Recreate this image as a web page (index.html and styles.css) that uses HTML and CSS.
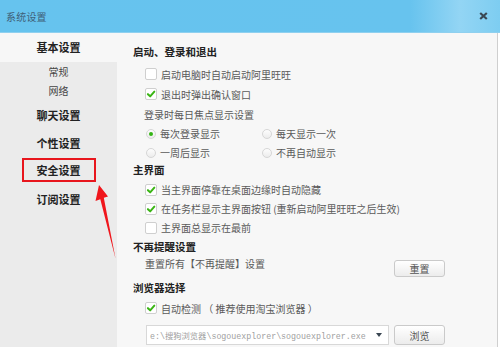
FILE: index.html
```html
<!DOCTYPE html>
<html lang="zh-CN">
<head>
<meta charset="utf-8">
<link rel="stylesheet" href="styles.css">
</head>
<body>
<div class="window">
  <div class="titlebar">
    <span class="title">系统设置</span>
    <svg class="close" width="9" height="8" viewBox="0 0 9 8"><path d="M1.2 1 L7.8 7 M7.8 1 L1.2 7"/></svg>
  </div>
  <div class="main">
    <nav class="sidebar">
      <div class="nav-head">基本设置</div>
      <div class="nav-subs">
        <div class="nav-sub">常规</div>
        <div class="nav-sub">网络</div>
      </div>
      <div class="nav-item">聊天设置</div>
      <div class="nav-item">个性设置</div>
      <div class="nav-item"><span class="highlight">安全设置</span></div>
      <div class="nav-item">订阅设置</div>
    </nav>
    <section class="content">
      <div class="group">
        <div class="heading">启动、登录和退出</div>
        <div class="row"><span class="cb"></span>启动电脑时自动启动阿里旺旺</div>
        <div class="row"><span class="cb on"><svg viewBox="0 0 12 12"><path d="M2.3 6.2 L5 8.8 L10 3.2"/></svg></span>退出时弹出确认窗口</div>
        <div class="row label">登录时每日焦点显示设置</div>
        <div class="radios">
          <div class="row rrow"><span class="radio on"></span>每次登录显示</div>
          <div class="row rrow"><span class="radio"></span>每天显示一次</div>
          <div class="row rrow"><span class="radio"></span>一周后显示</div>
          <div class="row rrow"><span class="radio"></span>不再自动显示</div>
        </div>
      </div>
      <div class="group g2">
        <div class="heading">主界面</div>
        <div class="row r19"><span class="cb on"><svg viewBox="0 0 12 12"><path d="M2.3 6.2 L5 8.8 L10 3.2"/></svg></span>当主界面停靠在桌面边缘时自动隐藏</div>
        <div class="row r19"><span class="cb on"><svg viewBox="0 0 12 12"><path d="M2.3 6.2 L5 8.8 L10 3.2"/></svg></span>在任务栏显示主界面按钮 (重新启动阿里旺旺之后生效)</div>
        <div class="row r19"><span class="cb"></span>主界面总显示在最前</div>
      </div>
      <div class="group">
        <div class="heading">不再提醒设置</div>
        <div class="reset-row">
          <span class="reset-text">重置所有【不再提醒】设置</span>
          <span class="btn btn-reset">重置</span>
        </div>
      </div>
      <div class="group g4">
        <div class="heading">浏览器选择</div>
        <div class="row"><span class="cb on"><svg viewBox="0 0 12 12"><path d="M2.3 6.2 L5 8.8 L10 3.2"/></svg></span>自动检测 （ 推荐使用淘宝浏览器 ）</div>
        <div class="path-row">
          <div class="select">
            <span class="path">e:\搜狗浏览器\sogouexplorer\sogouexplorer.exe</span>
            <span class="caret"></span>
          </div>
          <span class="btn btn-browse">浏览</span>
        </div>
      </div>
    </section>
  </div>
  <svg class="arrow" width="500" height="347" viewBox="0 0 500 347">
    <polygon points="99,185 95.5,201 100.3,199.2 115.6,259 103.8,197.8 108,196.6" fill="#f0161c"/>
  </svg>
</div>
</body>
</html>
```

FILE: styles.css
```css
* { box-sizing: border-box; margin: 0; padding: 0; }
html, body { width: 500px; height: 347px; overflow: hidden; background: #ffffff; }
body {
  font-family: "Noto Sans CJK SC", "Noto Sans", sans-serif;
  font-size: 10px;
  color: #555;
}
.window { position: relative; width: 500px; height: 347px; }
.titlebar {
  height: 33px;
  display: flex;
  align-items: center;
  justify-content: space-between;
  padding: 0 12px 0 6px;
  background: linear-gradient(to right, #66c3ee 0%, #67c3ee 82%, #93d5f4 92%, #7dcdf1 100%);
  border-bottom: 1px solid #8fd0ef;
}
.title { font-size: 10px; color: #3f6078; letter-spacing: 0.2px; }
.close { margin-top: -1px; }
.close path { stroke: #3a4853; stroke-width: 2.2; fill: none; }
.main {
  display: flex;
  width: 498px;
  height: 314px;
  border-right: 1px solid #cfcfcf;
  background: #f7f7f7;
}
.sidebar {
  width: 117px;
  flex: none;
  background: #ebebeb;
  color: #222;
}
.nav-head {
  height: 29px;
  line-height: 29px;
  text-align: center;
  font-weight: bold;
  font-size: 11px;
  background: #f7f7f7;
}
.nav-subs { margin-bottom: 1px; }
.nav-sub {
  height: 19px;
  line-height: 19px;
  text-align: center;
  font-size: 10px;
  color: #444;
}
.nav-item {
  height: 28px;
  display: flex;
  align-items: center;
  justify-content: center;
  font-weight: bold;
  font-size: 11px;
}
.highlight {
  display: flex;
  align-items: center;
  justify-content: center;
  width: 74px;
  height: 24px;
  margin-top: -2px;
  border: 2px solid #e8161d;
}
.content {
  flex: 1;
  padding: 9px 0 0 16px;
}
.heading {
  height: 20px;
  line-height: 20px;
  font-weight: bold;
  font-size: 10.5px;
  color: #222;
  margin-bottom: 2px;
}
.row {
  height: 20px;
  display: flex;
  align-items: center;
  padding-left: 12px;
  color: #5a5a5a;
}
.row.label { padding-left: 11px; }
.r19 { height: 19px; }
.g2 .heading { margin-top: -2px; margin-bottom: 0; }
.cb {
  width: 12px;
  height: 12px;
  flex: none;
  margin-right: 4px;
  border: 1px solid #cfcfcf;
  border-radius: 2px;
  background: #fff;
  display: flex;
}
.cb svg { width: 10px; height: 10px; }
.cb path { fill: none; stroke: #3ab514; stroke-width: 2.4; stroke-linecap: round; stroke-linejoin: round; }
.radios {
  display: grid;
  grid-template-columns: 116px 1fr;
}
.rrow { height: 19px; padding-left: 13px; }
.radio {
  width: 10px;
  height: 10px;
  flex: none;
  margin-right: 4px;
  border: 1px solid #d6d6d6;
  border-radius: 50%;
  background: linear-gradient(#fdfdfd, #ececec);
  display: flex;
  align-items: center;
  justify-content: center;
}
.radio.on::after {
  content: "";
  width: 4px;
  height: 4px;
  border-radius: 50%;
  background: #33b414;
}
.reset-row {
  height: 20px;
  display: flex;
  justify-content: space-between;
  align-items: flex-start;
  padding-left: 12px;
  margin-top: -2px;
  width: 312px;
}
.reset-text { line-height: 14px; color: #5a5a5a; }
.btn {
  display: flex;
  align-items: center;
  justify-content: center;
  width: 51px;
  height: 17px;
  border: 1px solid #cacaca;
  border-radius: 3px;
  background: linear-gradient(#ffffff, #ececec);
  color: #555;
  font-size: 10px;
}
.btn-reset { margin-top: 3px; }
.g4 .heading { margin-top: 1px; margin-bottom: 0; }
.path-row {
  display: flex;
  align-items: center;
  gap: 5px;
  margin-top: 6px;
  padding-left: 13px;
}
.select {
  width: 243px;
  height: 20px;
  display: flex;
  align-items: center;
  justify-content: space-between;
  padding: 0 6px 0 3px;
  background: #fff;
  border: 1px solid #d8d8d8;
}
.path {
  font-family: "Liberation Mono", "Noto Sans CJK SC", monospace;
  font-size: 8.3px;
  color: #a0a0a0;
}
.caret {
  width: 0;
  height: 0;
  border-left: 3.5px solid transparent;
  border-right: 3.5px solid transparent;
  border-top: 4px solid #3a4652;
}
.btn-browse { height: 20px; margin-top: 1px; }
.arrow { position: absolute; left: 0; top: 0; pointer-events: none; }
```
